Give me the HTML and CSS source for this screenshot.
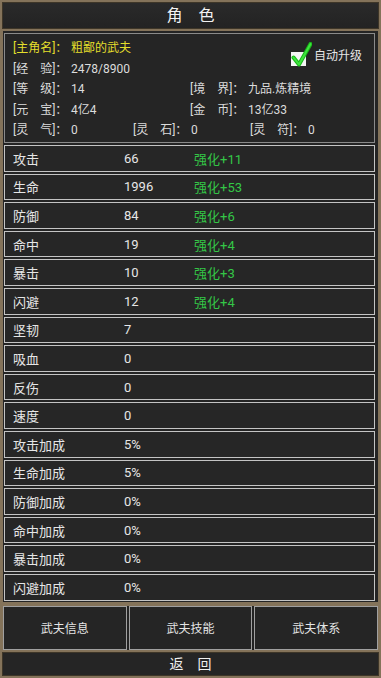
FILE: index.html
```html
<!DOCTYPE html>
<html lang="zh">
<head>
<meta charset="utf-8">
<title>角色</title>
<link rel="stylesheet" href="styles.css">
</head>
<body>
<div class="screen">
  <div class="titlebar">角　色</div>
  <div class="main">
    <div class="info">
      <div class="info-row first">
        <span class="cell"><span class="lbl yellow">[主角名]：</span><span class="yellow">粗鄙的武夫</span></span>
        <span class="auto">
          <svg class="check" width="22" height="25" viewBox="0 0 22 25">
            <rect x="1" y="10" width="15" height="14" fill="#f4f4f4"/>
            <path d="M3.5 15.5 L9 22.5 L20.5 2" fill="none" stroke="#18b818" stroke-width="4" stroke-linejoin="round" stroke-linecap="round"/>
            <path d="M3.5 15.5 L9 22.5 L20.5 2" fill="none" stroke="#3ee43e" stroke-width="2" stroke-linejoin="round" stroke-linecap="round"/>
          </svg>
          <span>自动升级</span>
        </span>
      </div>
      <div class="info-row">
        <span class="cell"><span class="lbl">[经　验]：</span>2478/8900</span>
      </div>
      <div class="info-row">
        <span class="cell w177"><span class="lbl">[等　级]：</span>14</span>
        <span class="cell"><span class="lbl">[境　界]：</span>九品.炼精境</span>
      </div>
      <div class="info-row">
        <span class="cell w177"><span class="lbl">[元　宝]：</span>4亿4</span>
        <span class="cell"><span class="lbl">[金　币]：</span>13亿33</span>
      </div>
      <div class="info-row">
        <span class="cell w120"><span class="lbl">[灵　气]：</span>0</span>
        <span class="cell w117"><span class="lbl">[灵　石]：</span>0</span>
        <span class="cell"><span class="lbl">[灵　符]：</span>0</span>
      </div>
    </div>
    <div class="stats">
      <div class="stat"><span class="s-label">攻击</span><span class="s-val">66</span><span class="s-plus">强化+11</span></div>
      <div class="stat"><span class="s-label">生命</span><span class="s-val">1996</span><span class="s-plus">强化+53</span></div>
      <div class="stat"><span class="s-label">防御</span><span class="s-val">84</span><span class="s-plus">强化+6</span></div>
      <div class="stat"><span class="s-label">命中</span><span class="s-val">19</span><span class="s-plus">强化+4</span></div>
      <div class="stat"><span class="s-label">暴击</span><span class="s-val">10</span><span class="s-plus">强化+3</span></div>
      <div class="stat"><span class="s-label">闪避</span><span class="s-val">12</span><span class="s-plus">强化+4</span></div>
      <div class="stat"><span class="s-label">坚韧</span><span class="s-val">7</span></div>
      <div class="stat"><span class="s-label">吸血</span><span class="s-val">0</span></div>
      <div class="stat"><span class="s-label">反伤</span><span class="s-val">0</span></div>
      <div class="stat"><span class="s-label">速度</span><span class="s-val">0</span></div>
      <div class="stat"><span class="s-label">攻击加成</span><span class="s-val">5%</span></div>
      <div class="stat"><span class="s-label">生命加成</span><span class="s-val">5%</span></div>
      <div class="stat"><span class="s-label">防御加成</span><span class="s-val">0%</span></div>
      <div class="stat"><span class="s-label">命中加成</span><span class="s-val">0%</span></div>
      <div class="stat"><span class="s-label">暴击加成</span><span class="s-val">0%</span></div>
      <div class="stat"><span class="s-label">闪避加成</span><span class="s-val">0%</span></div>
    </div>
  </div>
  <div class="tabs">
    <div class="tab">武夫信息</div>
    <div class="tab">武夫技能</div>
    <div class="tab">武夫体系</div>
  </div>
  <div class="back">返　回</div>
</div>
</body>
</html>
```

FILE: styles.css
```css
html, body {
  margin: 0;
  padding: 0;
  background: #84735a;
}
body {
  font-family: Roboto, "Noto Sans CJK SC", sans-serif;
  color: #dcdcdc;
}
.screen {
  width: 381px;
  height: 678px;
  box-sizing: border-box;
  padding-top: 2px;
  display: flex;
  flex-direction: column;
  background: #84735a;
}
.titlebar {
  margin: 0 2px;
  height: 27px;
  box-sizing: border-box;
  border: 1px solid #3e3628;
  background: linear-gradient(#2a2a2a, #232323);
  color: #f2f2f2;
  font-size: 16px;
  line-height: 25px;
  text-align: center;
}
.main {
  margin: 2px 3px 0;
  padding: 2px 3px 1px 1px;
  background: #242424;
}
.info {
  height: 110px;
  box-sizing: border-box;
  border: 1px solid #8a8a8a;
  background: #252525;
  padding: 4px 0 0 8px;
  font-size: 12px;
}
.info-row {
  display: flex;
  height: 20.5px;
  line-height: 20.5px;
  white-space: nowrap;
}
.info-row.first {
  align-items: flex-start;
}
.cell {
  display: flex;
}
.w177 { width: 177px; }
.w120 { width: 120px; }
.w117 { width: 117px; }
.lbl {
  width: 58px;
  flex: none;
}
.yellow {
  color: #e4df2c;
}
.auto {
  margin-left: auto;
  margin-right: 12px;
  margin-top: 4px;
  display: flex;
  align-items: flex-end;
  gap: 2px;
  color: #e6e6e6;
}
.auto span {
  line-height: 16px;
  padding-bottom: 3px;
}
.check {
  display: block;
}
.stats {
  margin-top: 2px;
  display: flex;
  flex-direction: column;
  gap: 2px;
}
.stat {
  height: 26.6px;
  box-sizing: border-box;
  border: 1px solid #c4c4c4;
  background: #262626;
  display: flex;
  align-items: center;
  padding-left: 8px;
  font-size: 13px;
  color: #e6e6e6;
  white-space: nowrap;
}
.s-label {
  width: 111px;
}
.s-val {
  width: 70px;
}
.s-plus {
  color: #34c646;
}
.tabs {
  margin: 4px 3px 0;
  height: 44px;
  background: #232323;
  display: flex;
  gap: 2px;
}
.tab {
  flex: 1;
  box-sizing: border-box;
  border: 1px solid #a0a0a0;
  display: flex;
  align-items: center;
  justify-content: center;
  font-size: 12px;
  color: #e4e4e4;
  background: #252525;
}
.back {
  margin: 2px 2px 0;
  height: 24px;
  box-sizing: border-box;
  border: 1px solid #3e3628;
  background: #252525;
  color: #f0f0f0;
  font-size: 14px;
  line-height: 22px;
  text-align: center;
}
```
